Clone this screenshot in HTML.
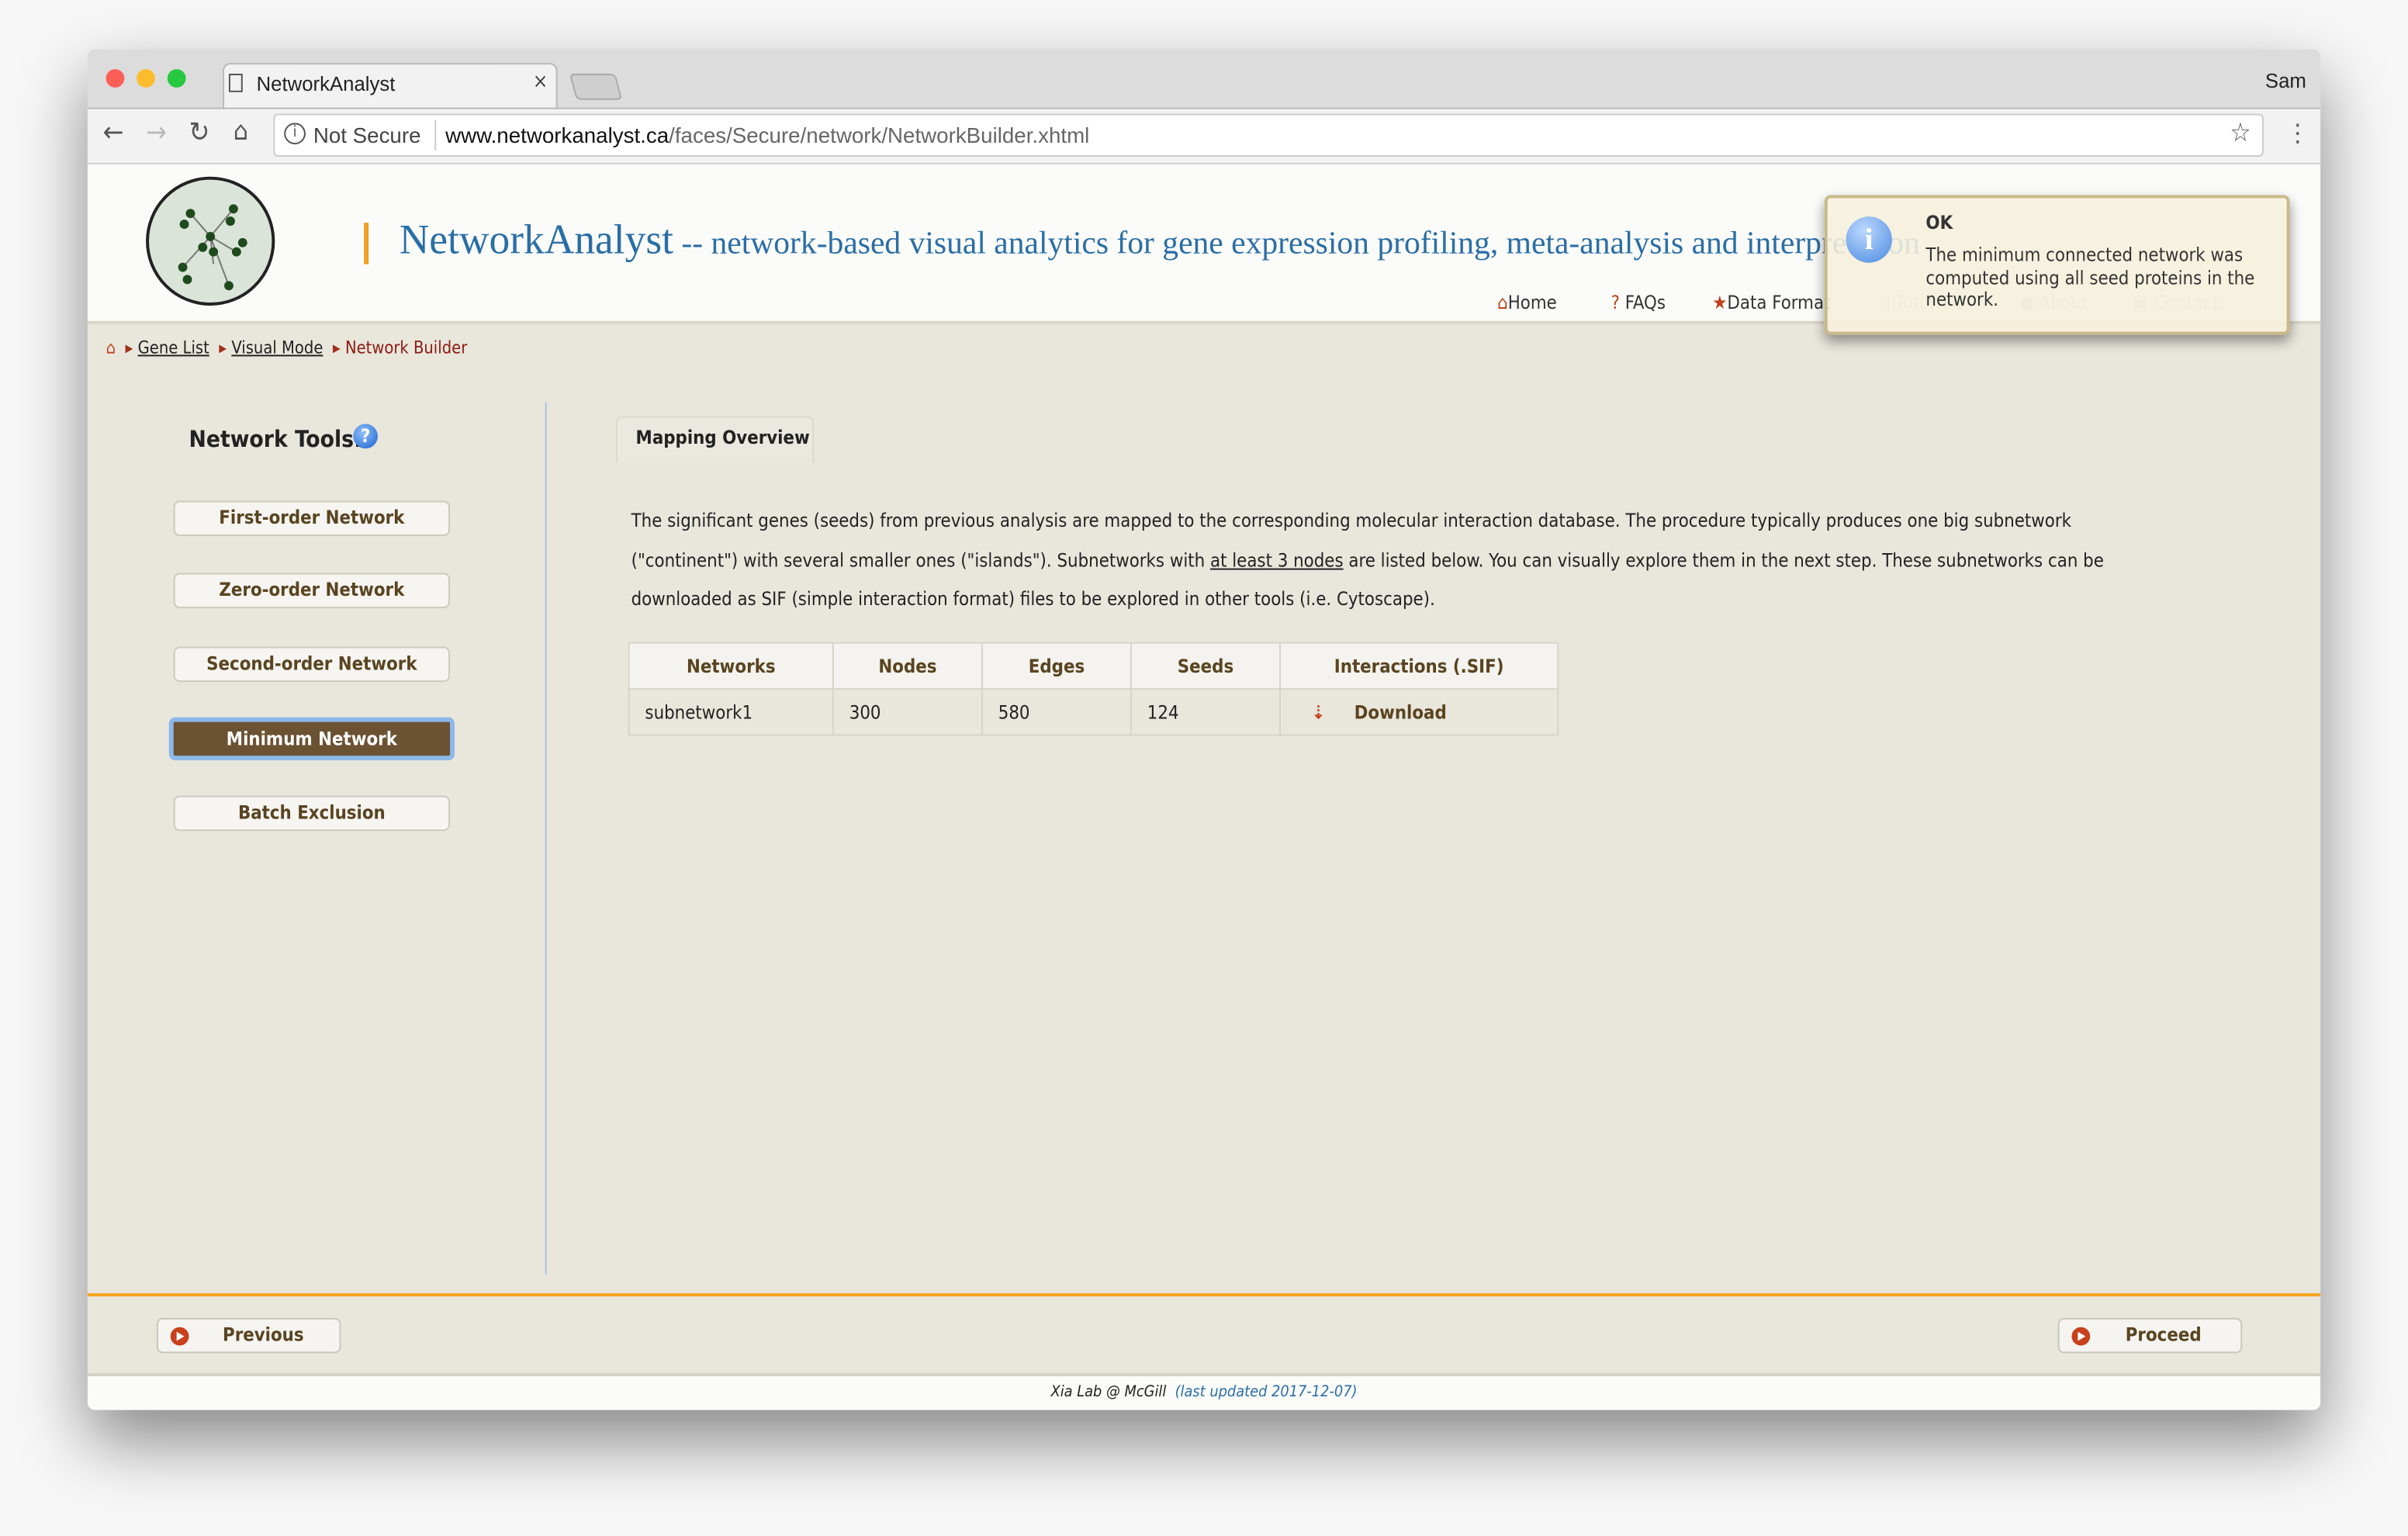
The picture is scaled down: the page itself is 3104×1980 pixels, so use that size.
<!DOCTYPE html>
<html><head><meta charset="utf-8"><style>
*{margin:0;padding:0;box-sizing:border-box}
html,body{width:3104px;height:1980px;overflow:hidden;background:#fff}
#s{position:absolute;left:0;top:0;width:1568px;height:1000px;transform:scale(1.9796,1.98);transform-origin:0 0;font-family:"DejaVu Sans Condensed","Liberation Sans",sans-serif;background:#f7f7f7}
.a{position:absolute}
.win{left:57px;top:32px;width:1454px;height:886px;border-radius:5px;overflow:hidden;box-shadow:0 20px 45px rgba(0,0,0,.45);background:#e9e6dc}
.btn{position:absolute;left:56px;width:180px;height:23px;background:#f6f5f2;border:1px solid #cfc9bd;border-radius:4px;font-size:12px;font-weight:bold;color:#5a4420;text-align:center;line-height:21px}
.nav{font-size:12px;color:#333}
table{border-collapse:collapse;font-size:12px}
td,th{border:1px solid #d8d4c8;height:30px}
th{background:#f4f3ef;color:#5a4420;font-weight:bold}
td{padding-left:10px;color:#222}
.pb{position:absolute;top:826px;width:120px;height:23px;background:#f5f4f1;border:1px solid #ccc6b8;border-radius:4px;font-size:12px;font-weight:bold;color:#5a4420;line-height:21px}
.pb i{position:absolute;left:8px;top:5px;width:12px;height:12px;border-radius:50%;background:#c8401c}
.pb i:after{content:"";position:absolute;left:4px;top:3px;border-left:5px solid #fff;border-top:3px solid transparent;border-bottom:3px solid transparent}
</style></head><body><div id="s">
<div class="a win">
 <div class="a" style="left:0;top:0;width:1454px;height:38px;background:#dcdcdc"></div>
 <div class="a" style="left:12px;top:13px;width:12px;height:12px;border-radius:50%;background:#fc5f57"></div>
 <div class="a" style="left:32px;top:13px;width:12px;height:12px;border-radius:50%;background:#fdbc2e"></div>
 <div class="a" style="left:52px;top:13px;width:12px;height:12px;border-radius:50%;background:#28c840"></div>
 <div class="a" style="left:88px;top:9px;width:218px;height:30px;background:#f2f2f2;border:1px solid #b8b8b8;border-bottom:none;border-radius:5px 5px 0 0"></div>
 <div class="a" style="left:92px;top:16px;width:9px;height:12px;border:1px solid #555"></div>
 <div class="a" style="left:110px;top:15px;font-size:13px;font-family:'Liberation Sans',sans-serif;color:#222">NetworkAnalyst</div>
 <div class="a" style="left:290px;top:14px;font-size:13px;color:#444">×</div>
 <div class="a" style="left:316px;top:16px;width:30px;height:17px;background:#cfcfcf;border:1px solid #aaa;border-radius:3px;transform:skewX(15deg)"></div>
 <div class="a" style="left:1418px;top:13px;font-size:13px;font-family:'Liberation Sans',sans-serif;color:#222">Sam</div>
 <div class="a" style="left:0;top:38px;width:1454px;height:37px;background:#f2f2f2;border-top:1px solid #b8b8b8;border-bottom:1px solid #ccc"></div>
 <div class="a" style="left:10px;top:44px;font-size:18px;color:#555">←</div>
 <div class="a" style="left:38px;top:44px;font-size:18px;color:#bbb">→</div>
 <div class="a" style="left:66px;top:44px;font-size:18px;color:#555">↻</div>
 <div class="a" style="left:95px;top:44px;font-size:17px;color:#555">⌂</div>
 <div class="a" style="left:121px;top:42px;width:1296px;height:28px;background:#fff;border:1px solid #ccc;border-radius:3px"></div>
 <div class="a" style="left:128px;top:48px;width:14px;height:14px;border:1px solid #555;border-radius:50%;font-size:10px;text-align:center;line-height:12px;color:#555">i</div>
 <div class="a" style="left:147px;top:48px;font-size:14px;font-family:'Liberation Sans',sans-serif;color:#444">Not Secure</div>
 <div class="a" style="left:226px;top:46px;width:1px;height:20px;background:#ccc"></div>
 <div class="a" style="left:233px;top:48px;font-size:14px;font-family:'Liberation Sans',sans-serif;color:#111">www.networkanalyst.ca<span style="color:#666">/faces/Secure/network/NetworkBuilder.xhtml</span></div>
 <div class="a" style="left:1395px;top:45px;font-size:17px;color:#555">☆</div>
 <div class="a" style="left:1432px;top:45px;font-size:16px;color:#555">⋮</div>
 <div class="a" style="left:0;top:75px;width:1454px;height:104px;background:#fbfbfa;border-bottom:2px solid #d9d6c9"></div>
 <svg class="a" style="left:37px;top:82px" width="86" height="86" viewBox="0 0 86 86"><circle cx="43" cy="43" r="41" fill="#dbe4d8" stroke="#222" stroke-width="2"/><g stroke="#777" stroke-width="1" fill="none"><path d="M43 40L30 25M43 40L58 22M43 40L60 50M43 40L25 60M43 40L55 72M43 40L45 58"/></g><g fill="#1e4a1e"><circle cx="30" cy="25" r="3"/><circle cx="26" cy="32" r="3"/><circle cx="58" cy="22" r="3"/><circle cx="56" cy="30" r="3"/><circle cx="60" cy="50" r="3"/><circle cx="64" cy="44" r="3"/><circle cx="25" cy="60" r="3"/><circle cx="28" cy="68" r="3"/><circle cx="55" cy="72" r="3"/><circle cx="43" cy="40" r="3"/><circle cx="45" cy="50" r="3"/><circle cx="38" cy="47" r="3"/></g></svg>
 <div class="a" style="left:180px;top:113px;width:3px;height:27px;background:#f0a020"></div>
 <div class="a" style="left:203px;top:109px;font-family:'Liberation Serif',serif;color:#2a6ea6;white-space:nowrap"><span style="font-size:27px">NetworkAnalyst</span><span style="font-size:21px"> -- network-based visual analytics for gene expression profiling, meta-analysis and interpretation</span></div>
 <div class="a nav" style="left:918px;top:158px"><span style="color:#c0401a">⌂</span>Home</div>
 <div class="a nav" style="left:992px;top:158px"><span style="color:#c0401a">?</span> FAQs</div>
 <div class="a nav" style="left:1058px;top:158px"><span style="color:#c0401a">★</span>Data Format</div>
 <div class="a nav" style="left:1168px;top:158px;color:#ccc">▯ Tutorials</div>
 <div class="a nav" style="left:1258px;top:158px;color:#ccc">● About</div>
 <div class="a nav" style="left:1332px;top:158px;color:#ccc">▣ Contact</div>
 <div class="a" style="left:12px;top:188px;font-size:11px;color:#222;white-space:nowrap"><span style="color:#c0401a">⌂</span> &nbsp;<span style="color:#a0301a">▸</span> <u>Gene List</u> &nbsp;<span style="color:#a0301a">▸</span> <u>Visual Mode</u> &nbsp;<span style="color:#a0301a">▸</span> <span style="color:#8b1a10">Network Builder</span></div>
 <div class="a" style="left:66px;top:245px;font-size:15px;font-weight:bold;color:#222">Network Tools:</div>
 <div class="a" style="left:173px;top:244px;width:16px;height:16px;border-radius:50%;background:radial-gradient(circle at 40% 35%,#8ec0ff,#1a5fc8);color:#fff;font-size:12px;font-weight:bold;text-align:center;line-height:16px">?</div>
 <div class="btn" style="top:294px">First-order Network</div>
 <div class="btn" style="top:341px">Zero-order Network</div>
 <div class="btn" style="top:389px">Second-order Network</div>
 <div class="btn" style="top:435px;left:53px;width:186px;height:28px;border:3px solid #8cb8ea;background:#6b5232;color:#fff;line-height:22px">Minimum Network</div>
 <div class="btn" style="top:486px">Batch Exclusion</div>
 <div class="a" style="left:298px;top:230px;width:1px;height:568px;background:#a9c4e0"></div>
 <div class="a" style="left:344px;top:239px;width:129px;height:30px;border:1px solid #dcd8cc;border-bottom:none;border-radius:4px 4px 0 0;background:#ebe8df;font-size:12px;font-weight:bold;color:#222;padding:6px 0 0 12px">Mapping Overview</div>
 <div class="a" style="left:354px;top:295px;font-size:12px;color:#222;line-height:25.5px;white-space:nowrap">The significant genes (seeds) from previous analysis are mapped to the corresponding molecular interaction database. The procedure typically produces one big subnetwork<br>("continent") with several smaller ones ("islands"). Subnetworks with <u>at least 3 nodes</u> are listed below. You can visually explore them in the next step. These subnetworks can be<br>downloaded as SIF (simple interaction format) files to be explored in other tools (i.e. Cytoscape).</div>
 <table class="a" style="left:352px;top:386px;width:606px">
 <tr><th style="width:133px">Networks</th><th style="width:97px">Nodes</th><th style="width:97px">Edges</th><th style="width:97px">Seeds</th><th>Interactions (.SIF)</th></tr>
 <tr><td>subnetwork1</td><td>300</td><td>580</td><td>124</td><td style="padding-left:20px;color:#5a4420;font-weight:bold"><span style="color:#c8401c">⇣</span>&nbsp;&nbsp;&nbsp;&nbsp;&nbsp;Download</td></tr>
 </table>
 <div class="a" style="left:0;top:810px;width:1454px;height:2px;background:#f5a31a"></div>
 <div class="pb" style="left:45px"><i></i><span style="margin-left:42px">Previous</span></div>
 <div class="pb" style="left:1283px"><i></i><span style="margin-left:43px">Proceed</span></div>
 <div class="a" style="left:0;top:862px;width:1454px;height:24px;background:#fbfbfa;border-top:2px solid #d5d2c4;font-size:10px;font-style:italic;text-align:center;line-height:22px;color:#222">Xia Lab @ McGill &nbsp;<span style="color:#2a6ea6">(last updated 2017-12-07)</span></div>
 <div class="a" style="left:1131px;top:95px;width:303px;height:91px;background:rgba(246,240,220,.88);border:2px solid #c9b98a;border-radius:4px;box-shadow:0 4px 8px rgba(0,0,0,.4)">
  <div class="a" style="left:12px;top:12px;width:30px;height:30px;border-radius:50%;background:radial-gradient(circle at 40% 30%,#bcd8ff,#4a8ae0);color:#fff;font-weight:bold;font-family:'Liberation Serif',serif;font-size:20px;text-align:center;line-height:30px">i</div>
  <div class="a" style="left:64px;top:9px;font-size:12px;font-weight:bold;color:#333">OK</div>
  <div class="a" style="left:64px;top:30px;font-size:12px;color:#333;line-height:14.5px;width:230px">The minimum connected network was computed using all seed proteins in the network.</div>
 </div>
</div>
</div></body></html>
